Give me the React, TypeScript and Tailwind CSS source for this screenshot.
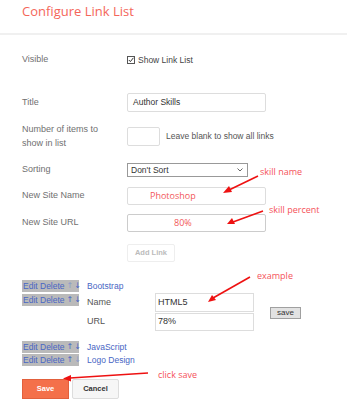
import React from "react"

function Check() {
    return (
        <span className="w-[8px] h-[8px] border border-[#555] bg-white flex items-center justify-center">
            <svg width="6" height="6" viewBox="0 0 6 6">
                <path d="M0.8 3 L2.4 4.6 L5.4 0.8" fill="none" stroke="#333" strokeWidth="1" />
            </svg>
        </span>
    )
}

function Actions({ upOff, downOff }: { upOff?: boolean; downOff?: boolean }) {
    return (
        <div className="bg-[#bababa] h-[12px] w-[57px] flex items-center pl-[1px] text-[8.5px] leading-none text-[#4866c4] whitespace-nowrap">
            <span>Edit Delete</span>
            <span className={`ml-[2px] font-['DejaVu_Sans',sans-serif] text-[8px] ${upOff ? "text-[#8a9bc9]" : ""}`}>↑</span>
            <span className={`ml-[1px] font-['DejaVu_Sans',sans-serif] text-[8px] ${downOff ? "text-[#8a9bc9]" : ""}`}>↓</span>
        </div>
    )
}

export default function App() {
    return (
        <div className="relative w-[347px] h-[400px] bg-white overflow-hidden font-['Liberation_Sans',Arial,sans-serif]">
            {/* header */}
            <div className="h-[33px] px-[22px] pt-[1px]">
                <h1 className="font-['Open_Sans',sans-serif] text-[13px] leading-[20px] text-[#f4665a]">Configure Link List</h1>
            </div>
            <div className="h-[2px] bg-[#f0f0f0]" />

            <div className="pl-[22px]">
                {/* visible */}
                <div className="flex items-center h-[14px] mt-[18px]">
                    <div className="w-[105px] text-[9px] text-[#707070]">Visible</div>
                    <div className="flex items-center gap-[3px] text-[8.5px] text-[#444]">
                        <Check />
                        <span>Show Link List</span>
                    </div>
                </div>

                {/* title */}
                <div className="flex items-center h-[19px] mt-[26px]">
                    <div className="w-[105px] text-[9px] text-[#707070]">Title</div>
                    <div className="w-[139px] h-[19px] border border-[#ddd] rounded-[2px] flex items-center pl-[5px] text-[8.5px] text-[#333]">Author Skills</div>
                </div>

                {/* number */}
                <div className="flex items-center h-[28px] mt-[10px]">
                    <div className="w-[105px] text-[9px] leading-[14px] text-[#707070]">
                        Number of items to<br />show in list
                    </div>
                    <div className="w-[33px] h-[19px] border border-[#ddd] rounded-[2px]" />
                    <span className="ml-[6px] text-[8.5px] text-[#555]">Leave blank to show all links</span>
                </div>

                {/* sorting */}
                <div className="flex items-center h-[14px] mt-[13px]">
                    <div className="w-[105px] text-[9px] text-[#707070]">Sorting</div>
                    <div className="w-[121px] h-[14px] border border-[#999] flex items-center justify-between pl-[3px] pr-[4px] text-[8.5px] text-[#333]">
                        <span>Don't Sort</span>
                        <svg width="6" height="4" viewBox="0 0 6 4">
                            <path d="M0.5 0.5 L3 3 L5.5 0.5" fill="none" stroke="#555" strokeWidth="0.9" />
                        </svg>
                    </div>
                </div>

                {/* new site name */}
                <div className="flex items-center h-[18px] mt-[10px]">
                    <div className="w-[105px] text-[9px] text-[#707070]">New Site Name</div>
                    <div className="w-[139px] h-[18px] border border-[#ddd] rounded-[2px] flex items-center pl-[22px] font-['Open_Sans',sans-serif] text-[9px] text-[#f2575a]">Photoshop</div>
                </div>

                {/* new site url */}
                <div className="flex items-center h-[18px] mt-[9px]">
                    <div className="w-[105px] text-[9px] text-[#707070]">New Site URL</div>
                    <div className="w-[139px] h-[18px] border border-[#ccc] rounded-[2px] flex items-center pl-[46px] font-['Open_Sans',sans-serif] text-[9px] text-[#f2575a]">80%</div>
                </div>

                {/* add link */}
                <div className="mt-[6px] ml-[105px]">
                    <button className="w-[48px] h-[18px] border border-[#eee] rounded-[2px] text-[7.5px] font-bold text-[#bbb]">Add Link</button>
                </div>

                {/* links */}
                <div className="flex items-center mt-[18px] h-[12px]">
                    <Actions upOff />
                    <span className="ml-[8px] text-[8.5px] text-[#4866c4]">Bootstrap</span>
                </div>

                <div className="flex items-start mt-[1px]">
                    <div className="mt-[1px]"><Actions /></div>
                    <div className="ml-[8px] flex flex-col gap-[1px]">
                        <div className="flex items-center h-[19px]">
                            <span className="w-[68px] text-[9px] text-[#555]">Name</span>
                            <div className="w-[99px] h-[19px] border border-[#ddd] flex items-center pl-[2px] text-[9px] text-[#333]">HTML5</div>
                        </div>
                        <div className="flex items-center h-[18px]">
                            <span className="w-[68px] text-[9px] text-[#555]">URL</span>
                            <div className="w-[99px] h-[18px] border border-[#ddd] flex items-center pl-[2px] text-[9px] text-[#333]">78%</div>
                        </div>
                    </div>
                    <button className="ml-[16px] mt-[14px] w-[31px] h-[12px] bg-[#e2e2e2] border border-[#a0a0a0] text-[8px] leading-none text-[#333]">save</button>
                </div>

                <div className="flex items-center mt-[10px] h-[12px]">
                    <Actions />
                    <span className="ml-[8px] text-[8.5px] text-[#4866c4]">JavaScript</span>
                </div>
                <div className="flex items-center mt-[1px] h-[12px]">
                    <Actions downOff />
                    <span className="ml-[8px] text-[8.5px] text-[#4866c4]">Logo Design</span>
                </div>

                {/* buttons */}
                <div className="flex gap-[3px] mt-[13px]">
                    <button className="w-[47px] h-[20px] bg-[#f4704a] border border-[#e2603c] text-[7.5px] font-bold text-white">Save</button>
                    <button className="w-[47px] h-[20px] bg-[#f6f6f6] border border-[#ddd] rounded-[2px] text-[7.5px] font-bold text-[#333]">Cancel</button>
                </div>
            </div>

            {/* annotations */}
            <span className="absolute left-[260px] top-[165px] font-['Open_Sans',sans-serif] text-[9px] text-[#f5525a]">skill name</span>
            <span className="absolute left-[269px] top-[203px] font-['Open_Sans',sans-serif] text-[9px] text-[#f5525a]">skill percent</span>
            <span className="absolute left-[257px] top-[269px] font-['Open_Sans',sans-serif] text-[9px] text-[#f5525a]">example</span>
            <span className="absolute left-[158px] top-[368px] font-['Open_Sans',sans-serif] text-[9px] text-[#f5525a]">click save</span>

            <svg className="absolute inset-0 pointer-events-none" width="347" height="400" viewBox="0 0 347 400">
                <g stroke="#ee1111" strokeWidth="1.6" fill="#ee1111">
                    <line x1="258" y1="176" x2="229" y2="190" />
                    <polygon points="223,193 229,186 232,192" stroke="none" />
                    <line x1="263" y1="211" x2="233" y2="222" />
                    <polygon points="227,224 232,218 235,224" stroke="none" />
                    <line x1="250" y1="277" x2="213" y2="298" />
                    <polygon points="208,302 212,295 216,300" stroke="none" />
                    <line x1="148" y1="373" x2="70" y2="378" />
                    <polygon points="63,378.5 71,375 71,381.5" stroke="none" />
                </g>
            </svg>
        </div>
    )
}
